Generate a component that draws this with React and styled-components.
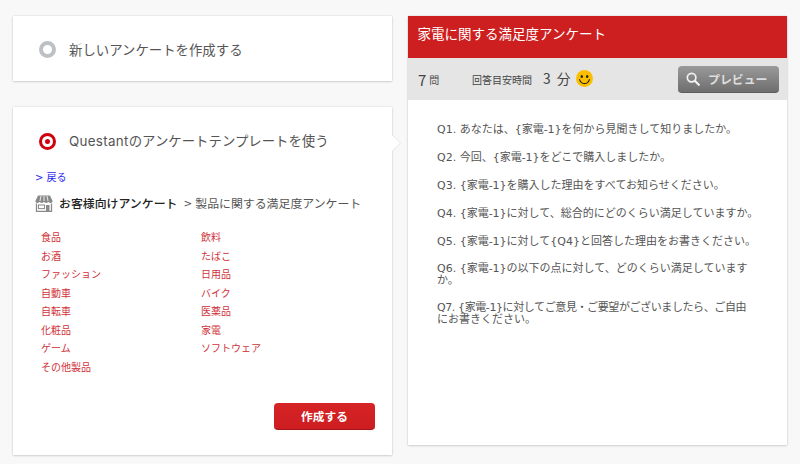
import React from "react";
import styled, { createGlobalStyle } from "styled-components";

const Global = createGlobalStyle`
  html, body { margin: 0; padding: 0; background: #f8f8f8; }
  body { font-family: "Noto Sans CJK JP", "Noto Sans", sans-serif; color: #444; }
  * { box-sizing: border-box; }
`;

const Page = styled.div`
  width: 800px;
  height: 464px;
  overflow: hidden;
  padding: 16px 13px 0;
  display: grid;
  grid-template-columns: 379px 379px;
  column-gap: 16px;
  align-items: start;
`;

const LeftColumn = styled.div`
  display: flex;
  flex-direction: column;
  gap: 26px;
`;

const Card = styled.section`
  position: relative;
  background: #fff;
  box-shadow: 0 0 2px rgba(0, 0, 0, 0.14), 0 1px 2px rgba(0, 0, 0, 0.12);
`;

const OptionCard = styled(Card)`
  height: 65px;
  padding: 2px 24px 0;
  display: flex;
  align-items: center;
`;

const TemplateCard = styled(Card)`
  height: 348px;
  padding: 24px 17px 0 22px;
  &::after {
    content: "";
    position: absolute;
    right: -8px;
    top: 28px;
    border-left: 8px solid #fff;
    border-top: 8px solid transparent;
    border-bottom: 8px solid transparent;
    filter: drop-shadow(1px 0 0 rgba(0, 0, 0, 0.07));
  }
`;

const OptionRow = styled.div`
  display: flex;
  align-items: center;
  gap: 13px;
  padding-left: ${(p) => p.$inset}px;
`;

const Radio = styled.span`
  width: 17px;
  height: 17px;
  flex: none;
  border-radius: 50%;
  border: ${(p) => (p.$on ? "3.5px solid #d0000f" : "4px solid #bdc1c6")};
  background: #fff;
  display: flex;
  align-items: center;
  justify-content: center;
  &::after {
    content: "";
    display: ${(p) => (p.$on ? "block" : "none")};
    width: 5px;
    height: 5px;
    border-radius: 50%;
    background: #d0000f;
  }
`;

const OptionLabel = styled.span`
  font-family: Inter, "Noto Sans CJK JP", sans-serif;
  font-size: 13.4px;
  line-height: 20px;
  color: #555;
`;

const Brand = styled.span`
  letter-spacing: 0.3px;
`;

const BackLink = styled.a`
  display: block;
  margin-top: 20px;
  font-family: "DejaVu Sans", "Noto Sans CJK JP", sans-serif;
  font-size: 10px;
  line-height: 14px;
  color: #2a2af0;
`;

const Crumbs = styled.div`
  display: flex;
  align-items: center;
  margin-top: 9px;
  font-size: 11.9px;
  line-height: 18px;
  color: #555;
`;

const CrumbStrong = styled.strong`
  margin: 0 6px 0 6px;
  font-size: 11.9px;
  font-weight: 500;
  color: #222;
`;

const CrumbArrow = styled.span`
  margin-right: 3px;
  font-family: "DejaVu Sans", sans-serif;
  font-size: 10.5px;
`;

const Categories = styled.ul`
  list-style: none;
  margin: 16px 0 0;
  padding: 0 0 0 6px;
  display: grid;
  grid-template-columns: 160px 160px;
  grid-template-rows: repeat(8, 18.5px);
  grid-auto-flow: column;
`;

const Category = styled.li`
  font-size: 10px;
  line-height: 18.5px;
  color: #d0323a;
`;

const Footer = styled.div`
  display: flex;
  justify-content: flex-end;
  margin-top: 27px;
`;

const CreateButton = styled.button`
  width: 101px;
  height: 27px;
  padding: 0;
  border: 0;
  border-bottom: 1px solid #a81518;
  border-radius: 4px;
  background: linear-gradient(#d62426, #cd1d20);
  color: #fff;
  font: 700 11.7px/26px "Noto Sans CJK JP", sans-serif;
`;

const PreviewCard = styled(Card)`
  height: 429px;
`;

const TitleBar = styled.h2`
  margin: 0;
  height: 42px;
  padding: 0 9.5px;
  background: #cd1f20;
  color: #fff;
  font-size: 13.5px;
  font-weight: 400;
  line-height: 35px;
`;

const InfoBar = styled.div`
  height: 42px;
  padding: 0 8px 0 10px;
  background: #e5e5e5;
  display: flex;
  align-items: center;
  color: #444;
`;

const Count = styled.span`
  width: 54px;
  display: flex;
  align-items: baseline;
  gap: 3px;
  font-size: 15px;
  small { font-size: 10px; position: relative; top: -2px; }
`;

const TimeLabel = styled.span`
  font-size: 10px;
  margin-right: 11px;
`;

const TimeValue = styled.span`
  font-size: 13.8px;
  margin: 0 5px 3px 0;
  word-spacing: 3px;
`;

const SmileySlot = styled.span`
  display: flex;
  margin-bottom: 1px;
`;

const PreviewButton = styled.button`
  margin-left: auto;
  width: 101px;
  height: 27px;
  padding: 0 0 0 8px;
  border: 0;
  border-radius: 4px;
  background: linear-gradient(#9a9a9a, #6e6e6e);
  border-bottom: 1px solid #5d5d5d;
  color: #dedede;
  display: flex;
  align-items: center;
  gap: 8px;
  font: 700 11.9px/26px "Noto Sans CJK JP", sans-serif;
`;

const Questions = styled.ol`
  list-style: none;
  margin: 0;
  padding: 24px 20px 0 29px;
  display: flex;
  flex-direction: column;
  gap: 16px;
`;

const Question = styled.li`
  margin-top: ${(p) => (p.$tight ? "-1px" : "0")};
  font-family: "DejaVu Sans", "Noto Sans CJK JP", sans-serif;
  font-size: 11px;
  line-height: 12px;
  color: #555;
  white-space: nowrap;
`;

const QuestionLine = styled.span`
  display: block;
  letter-spacing: ${(p) => (p.$squeeze ? "-0.4px" : "0")};
`;

const Smiley = () => (
  <svg width="17" height="17" viewBox="0 0 17 17">
    <circle cx="8.5" cy="8.5" r="8.5" fill="#fbbf00" />
    <ellipse cx="5.8" cy="6.5" rx="1.2" ry="1.6" fill="#222" />
    <ellipse cx="11.2" cy="6.5" rx="1.2" ry="1.6" fill="#222" />
    <path d="M3.6 9.6c1 3 3 4 4.9 4s3.9-1 4.9-4" fill="none" stroke="#222" strokeWidth="1.1" strokeLinecap="round" />
  </svg>
);

const Magnifier = () => (
  <svg width="14" height="14" viewBox="0 0 14 14">
    <circle cx="5.6" cy="5.6" r="4.3" fill="none" stroke="#f2f2f2" strokeWidth="1.7" />
    <path d="M8.8 8.8l4 4" stroke="#f2f2f2" strokeWidth="2.2" strokeLinecap="round" />
  </svg>
);

const Shop = () => (
  <svg width="18" height="17" viewBox="0 0 18 17">
    <path d="M3 .5h12l2.6 5.4c0 1.5-1.3 2-2.2 2s-1.6-.5-2-1.2c-.4.7-1.2 1.2-2.2 1.2S9.400 7.400 9 6.700C8.600 7.400 7.800 7.900 6.800 7.900s-1.800-.5-2.200-1.200c-.4.7-1.100 1.200-2 1.200S.4 7.400.4 5.900z" fill="#8a8a8a" />
    <path d="M6 1l-1 5M9 1v5M12 1l1 5" stroke="#fff" strokeWidth=".8" />
    <path d="M1.500 8.500v8h15v-8" fill="none" stroke="#8a8a8a" strokeWidth="1.300" />
    <rect x="3.500" y="10" width="6" height="3.600" fill="none" stroke="#8a8a8a" />
    <rect x="11" y="10" width="3.500" height="6.500" fill="#8a8a8a" />
  </svg>
);

const categories = ["食品","お酒","ファッション","自動車","自転車","化粧品","ゲーム","その他製品","飲料","たばこ","日用品","バイク","医薬品","家電","ソフトウェア"];

const questions = [
  { lines: ["Q1. あなたは、{家電-1}を何から見聞きして知りましたか。"] },
  { lines: ["Q2. 今回、{家電-1}をどこで購入しましたか。"] },
  { lines: ["Q3. {家電-1}を購入した理由をすべてお知らせください。"] },
  { lines: ["Q4. {家電-1}に対して、総合的にどのくらい満足していますか。"] },
  { lines: ["Q5. {家電-1}に対して{Q4}と回答した理由をお書きください。"] },
  { lines: ["Q6. {家電-1}の以下の点に対して、どのくらい満足しています", "か。"], tight: true },
  { lines: ["Q7. {家電-1}に対してご意見・ご要望がございましたら、ご自由", "にお書きください。"], tight: true, squeeze: true },
];

export default function App() {
  return (
    <>
      <Global />
      <Page>
        <LeftColumn>
          <OptionCard>
            <OptionRow $inset={2}>
              <Radio />
              <OptionLabel>新しいアンケートを作成する</OptionLabel>
            </OptionRow>
          </OptionCard>
          <TemplateCard>
            <OptionRow $inset={4}>
              <Radio $on />
              <OptionLabel><Brand>Questant</Brand>のアンケートテンプレートを使う</OptionLabel>
            </OptionRow>
            <BackLink>&gt; 戻る</BackLink>
            <Crumbs>
              <Shop />
              <CrumbStrong>お客様向けアンケート</CrumbStrong>
              <CrumbArrow>&gt;</CrumbArrow>
              製品に関する満足度アンケート
            </Crumbs>
            <Categories>
              {categories.map((c) => (
                <Category key={c}>{c}</Category>
              ))}
            </Categories>
            <Footer>
              <CreateButton>作成する</CreateButton>
            </Footer>
          </TemplateCard>
        </LeftColumn>
        <PreviewCard>
          <TitleBar>家電に関する満足度アンケート</TitleBar>
          <InfoBar>
            <Count>7<small>問</small></Count>
            <TimeLabel>回答目安時間</TimeLabel>
            <TimeValue>3 分</TimeValue>
            <SmileySlot><Smiley /></SmileySlot>
            <PreviewButton><Magnifier />プレビュー</PreviewButton>
          </InfoBar>
          <Questions>
            {questions.map((q) => (
              <Question key={q.lines[0]} $tight={q.tight}>
                {q.lines.map((line, i) => (
                  <QuestionLine key={line} $squeeze={q.squeeze && i === 0}>{line}</QuestionLine>
                ))}
              </Question>
            ))}
          </Questions>
        </PreviewCard>
      </Page>
    </>
  );
}
